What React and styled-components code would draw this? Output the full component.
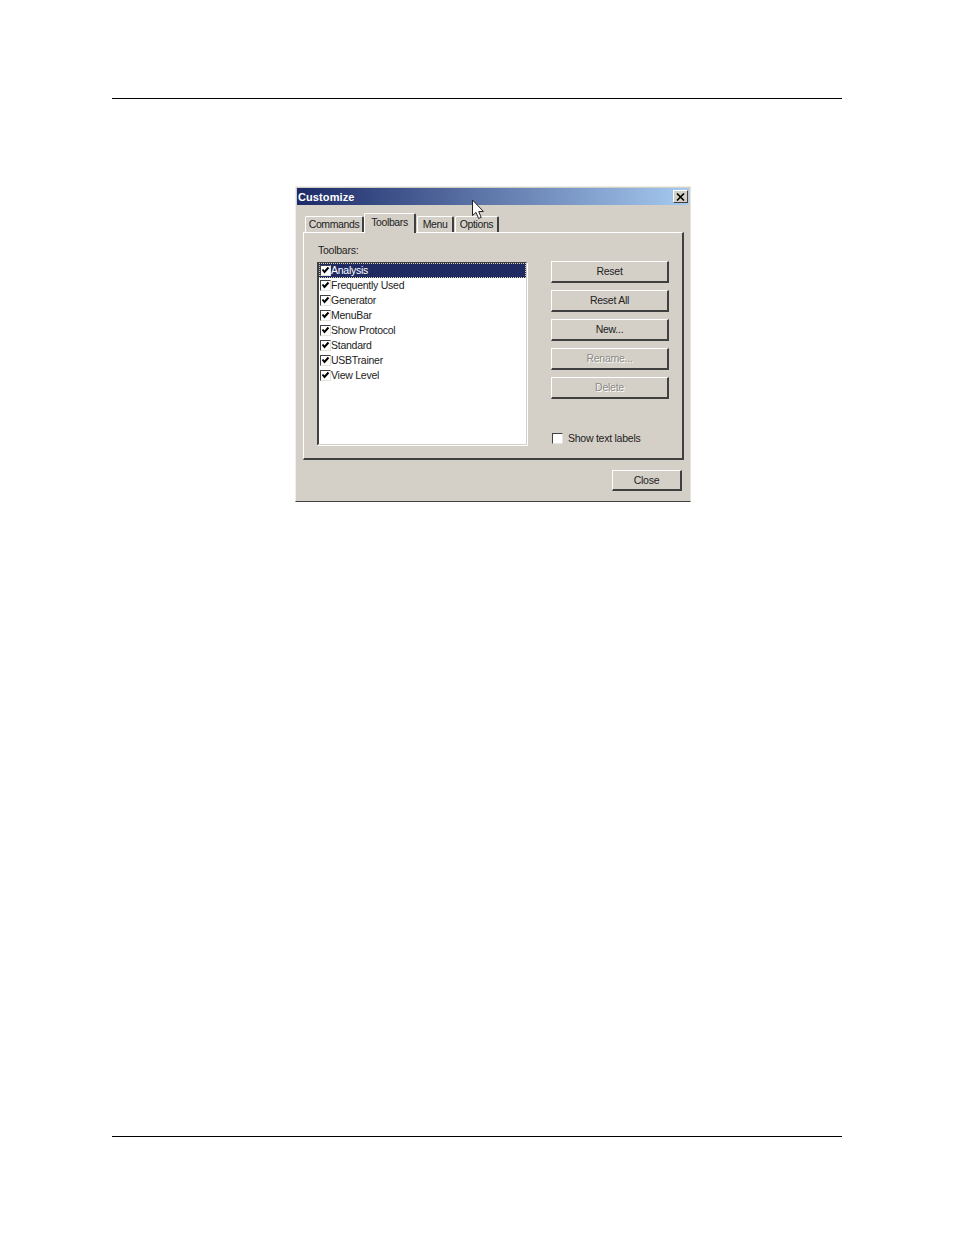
import React from 'react';
import styled, { createGlobalStyle } from 'styled-components';

const GlobalStyle = createGlobalStyle`
  html, body {
    margin: 0;
    padding: 0;
    background: #fff;
  }
  * {
    box-sizing: border-box;
  }
`;

const Page = styled.div`
  width: 954px;
  height: 1235px;
  padding-top: 98px;
  overflow: hidden;
`;

const Rule = styled.div`
  width: 730px;
  height: 1px;
  margin: 0 0 0 112px;
  background: #000;
`;

const Dialog = styled.div`
  position: relative;
  width: 396px;
  height: 316px;
  margin: 87px 0 634px 295px;
  padding: 1px;
  background: #d4d0c8;
  border-style: solid;
  border-width: 1px;
  border-color: #f1efe9 #e6e3dc #404040 #f1efe9;
  font: 10.5px 'Liberation Sans', Arial, sans-serif;
  letter-spacing: -0.25px;
  color: #222;
`;

const TitleBar = styled.div`
  display: flex;
  align-items: center;
  justify-content: space-between;
  height: 17px;
  padding: 0 1px;
  background: linear-gradient(90deg, #1c2a68 0%, #a6caf0 100%);
`;

const TitleText = styled.span`
  color: #fff;
  font-weight: bold;
  font-size: 11px;
  letter-spacing: 0.1px;
`;

const CloseBox = styled.div`
  display: flex;
  align-items: center;
  justify-content: center;
  width: 15px;
  height: 13px;
  background: #d4d0c8;
  border-style: solid;
  border-width: 1px;
  border-color: #fff #404040 #404040 #fff;
`;

const Body = styled.div`
  padding: 8px 0 0 6px;
`;

const TabStrip = styled.div`
  display: flex;
  align-items: flex-end;
  height: 19px;
  margin-left: 2px;
`;

const Tab = styled.div`
  position: relative;
  z-index: ${(p) => (p.$active ? 2 : 0)};
  display: flex;
  align-items: center;
  justify-content: center;
  width: ${(p) => p.$w}px;
  height: ${(p) => (p.$active ? 20 : 16)}px;
  margin-left: ${(p) => p.$ml || 0}px;
  margin-bottom: ${(p) => (p.$active ? -1 : 0)}px;
  padding-bottom: ${(p) => (p.$active ? 4 : 1)}px;
  letter-spacing: -0.4px;
  background: #d4d0c8;
  border-style: solid;
  border-width: 1px 2px 0 1px;
  border-color: #fff #404040 #d4d0c8 #fff;
  border-radius: 2px 2px 0 0;
`;

const Panel = styled.div`
  display: flex;
  gap: 24px;
  width: 381px;
  height: 228px;
  padding: 11px 13px 13px 13px;
  background: #d4d0c8;
  border-style: solid;
  border-width: 1px 2px 2px 1px;
  border-color: #fff #404040 #404040 #fff;
`;

const ListColumn = styled.div`
  display: flex;
  flex-direction: column;
  width: 210px;
`;

const FieldLabel = styled.div`
  height: 18px;
  line-height: 13px;
  padding-left: 1px;
`;

const ListBox = styled.div`
  height: 183px;
  background: #fff;
  border-style: solid;
  border-width: 1px 1px 1px 2px;
  border-color: #404040 #d4d0c8 #d4d0c8 #404040;
  box-shadow: 1px 1px 0 #fff;
`;

const ListRow = styled.div`
  display: flex;
  align-items: center;
  height: 15px;
  padding-left: 1px;
  color: ${(p) => (p.$selected ? '#fff' : '#222')};
  background: ${(p) => (p.$selected ? '#1f2a63' : 'transparent')};
  outline: ${(p) => (p.$selected ? '1px dotted #d8d4a8' : 'none')};
  outline-offset: -1px;
`;

const RowText = styled.span`
  padding-bottom: 2px;
`;

const CheckBox = styled.div`
  display: flex;
  align-items: center;
  justify-content: center;
  flex: none;
  width: 11px;
  height: 11px;
  background: #fff;
  border-style: solid;
  border-width: 1px;
  border-color: #404040 #e6e3dc #e6e3dc #404040;
`;

const ButtonColumn = styled.div`
  display: flex;
  flex-direction: column;
  gap: 7px;
  width: 118px;
  padding-top: 17px;
`;

const PushButton = styled.div`
  display: flex;
  align-items: center;
  justify-content: center;
  flex: none;
  width: ${(p) => p.$w || 118}px;
  height: ${(p) => p.$h || 22}px;
  padding-bottom: 1px;
  background: #d4d0c8;
  border-style: solid;
  border-width: 1px 2px 2px 1px;
  border-color: #fff #404040 #404040 #fff;
  color: ${(p) => (p.$disabled ? '#8c8a84' : '#222')};
  text-shadow: ${(p) => (p.$disabled ? '1px 1px 0 #fff' : 'none')};
`;

const CheckRow = styled.div`
  display: flex;
  align-items: center;
  gap: 5px;
  height: 13px;
  margin-top: auto;
  margin-left: 1px;
`;

const Footer = styled.div`
  display: flex;
  justify-content: flex-end;
  padding: 10px 7px 0 0;
`;

const Pointer = styled.svg`
  position: absolute;
  left: 175px;
  top: 12px;
`;

const toolbars = [
  'Analysis',
  'Frequently Used',
  'Generator',
  'MenuBar',
  'Show Protocol',
  'Standard',
  'USBTrainer',
  'View Level',
];

function Tick() {
  return (
    <svg width="9" height="9" viewBox="0 0 9 9">
      <path d="M1.5 3.5 L3.5 6 L7.5 1.5" fill="none" stroke="#000" strokeWidth="2" />
    </svg>
  );
}

export default function App() {
  return (
    <Page>
      <GlobalStyle />
      <Rule />
      <Dialog>
        <TitleBar>
          <TitleText>Customize</TitleText>
          <CloseBox>
            <svg width="9" height="8" viewBox="0 0 9 8">
              <path d="M1 0.5 L8 7.5 M8 0.5 L1 7.5" stroke="#000" strokeWidth="1.6" />
            </svg>
          </CloseBox>
        </TitleBar>
        <Body>
          <TabStrip>
            <Tab $w={59}>Commands</Tab>
            <Tab $w={52} $active>Toolbars</Tab>
            <Tab $w={37} $ml={1}>Menu</Tab>
            <Tab $w={44} $ml={1}>Options</Tab>
          </TabStrip>
          <Panel>
            <ListColumn>
              <FieldLabel>Toolbars:</FieldLabel>
              <ListBox>
                {toolbars.map((name, i) => (
                  <ListRow key={name} $selected={i === 0}>
                    <CheckBox><Tick /></CheckBox>
                    <RowText>{name}</RowText>
                  </ListRow>
                ))}
              </ListBox>
            </ListColumn>
            <ButtonColumn>
              <PushButton>Reset</PushButton>
              <PushButton>Reset All</PushButton>
              <PushButton>New...</PushButton>
              <PushButton $disabled>Rename...</PushButton>
              <PushButton $disabled>Delete</PushButton>
              <CheckRow>
                <CheckBox />
                <RowText>Show text labels</RowText>
              </CheckRow>
            </ButtonColumn>
          </Panel>
          <Footer>
            <PushButton $w={70} $h={21}>Close</PushButton>
          </Footer>
        </Body>
        <Pointer width="14" height="22" viewBox="0 0 14 22">
          <path d="M1.5 1 L1.5 16.5 L5 13.4 L7.6 19.5 L10.2 18.4 L7.7 12.6 L12.4 12.4 Z" fill="#fff" stroke="#222" strokeWidth="1" />
        </Pointer>
      </Dialog>
      <Rule />
    </Page>
  );
}
